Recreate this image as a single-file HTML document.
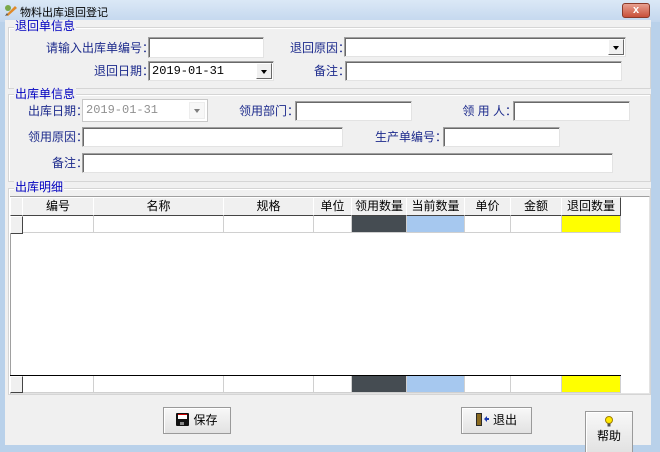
<!DOCTYPE html>
<html><head><meta charset="utf-8"><style>
*{margin:0;padding:0;box-sizing:border-box}
body{width:660px;height:452px;background:#b9d1ea;position:relative;overflow:hidden;font-family:"Liberation Sans","Noto Sans CJK SC",sans-serif;font-size:12px}
.a{position:absolute}
.title{left:0;top:0;width:660px;height:22px;background:linear-gradient(#dbe8f6,#c3d7ee)}
.client{left:5px;top:20px;width:646px;height:425px;background:#f0f0f0}
.grp{position:absolute;border:1px solid #d5d5d5;box-shadow:inset 1px 1px 0 #fff}
.gt{position:absolute;background:#f0f0f0;color:#0000c0;font-size:12px;line-height:13px;padding:0 1px}
.lb{position:absolute;color:#1c2a8c;font-size:12px;line-height:14px;white-space:nowrap;text-align:right;width:150px}
.in{position:absolute;background:#fff;border:1px solid #a0a0a0;border-right-color:#e3e3e3;border-bottom-color:#e3e3e3;box-shadow:inset 1px 1px 0 #696969}
.dd{position:absolute;width:16px;background:#f0f0f0;border:1px solid;border-color:#fff #696969 #696969 #fff}
.dd:after{content:"";position:absolute;left:4px;top:6px;border:3px solid transparent;border-top:4px solid #000;border-bottom:0}
.txt{position:absolute;left:3px;top:2px;font-family:"Liberation Mono","DejaVu Sans Mono",monospace;font-size:12px}
.hd{position:absolute;top:197px;height:19px;background:#f0f0f0;border:1px solid;border-color:#fff #444 #444 #fff;text-align:center;line-height:17px;font-size:12px}
.cl{position:absolute;height:17px;border-right:1px solid #d0d0d0;border-bottom:1px solid #d0d0d0}
.btn{position:absolute;background:linear-gradient(#f8f8f8,#e2e2e2);border:1px solid #9a9a9a;box-shadow:inset 1px 1px 0 #fff;font-size:12px;text-align:center}
</style></head><body>
<div class="a title"></div>
<div class="a" style="left:4px;top:3px;width:14px;height:14px;"><svg width="14" height="14"><path d="M2 12 L11 3 L13 5 L4 13Z" fill="#e08a2a"/><path d="M1 13 L3 10 L4 12Z" fill="#555"/><circle cx="4" cy="5" r="3" fill="#7aa84a"/></svg></div>
<div class="a" style="left:20px;top:4px;font-size:11px;color:#000">物料出库退回登记</div>
<div class="a" style="left:622px;top:3px;width:28px;height:15px;background:linear-gradient(#e8a090,#c8503a);border:1px solid #8a3a2a;border-radius:3px;color:#fff;font-size:11px;text-align:center;line-height:13px;font-weight:bold">x</div>
<div class="a client"></div>

<div class="grp" style="left:8px;top:27px;width:643px;height:62px"></div>
<div class="gt" style="left:14px;top:20px;">退回单信息</div>
<div class="lb" style="left:4px;top:41px">请输入出库单编号：</div>
<div class="in" style="left:148px;top:37px;width:116px;height:21px"></div>
<div class="lb" style="left:200px;top:41px">退回原因：</div>
<div class="in" style="left:344px;top:37px;width:282px;height:20px"><div class="dd" style="right:1px;top:1px;height:16px"></div></div>
<div class="lb" style="left:4px;top:64px">退回日期：</div>
<div class="in" style="left:148px;top:61px;width:126px;height:20px"><span class="txt">2019-01-31</span><div class="dd" style="right:1px;top:1px;height:16px"></div></div>
<div class="lb" style="left:200px;top:64px">备注：</div>
<div class="in" style="left:345px;top:61px;width:277px;height:20px"></div>

<div class="grp" style="left:8px;top:94px;width:643px;height:88px"></div>
<div class="gt" style="left:14px;top:88px;">出库单信息</div>
<div class="lb" style="left:-62px;top:104px">出库日期：</div>
<div class="in" style="left:82px;top:99px;width:126px;height:23px;border-color:#c8c8c8;box-shadow:none"><span class="txt" style="color:#909090;top:3px">2019-01-31</span><div class="dd" style="right:2px;top:2px;height:17px;border-color:#ddd;opacity:.5"></div></div>
<div class="lb" style="left:149px;top:104px">领用部门：</div>
<div class="in" style="left:295px;top:101px;width:117px;height:20px"></div>
<div class="lb" style="left:367px;top:104px">领 用 人：</div>
<div class="in" style="left:513px;top:101px;width:117px;height:20px"></div>
<div class="lb" style="left:-62px;top:130px">领用原因：</div>
<div class="in" style="left:82px;top:127px;width:261px;height:20px"></div>
<div class="lb" style="left:297px;top:130px">生产单编号：</div>
<div class="in" style="left:443px;top:127px;width:117px;height:20px"></div>
<div class="lb" style="left:-62px;top:156px">备注：</div>
<div class="in" style="left:82px;top:153px;width:531px;height:20px"></div>

<div class="grp" style="left:8px;top:188px;width:643px;height:207px"></div>
<div class="gt" style="left:14px;top:181px;">出库明细</div>
<div class="a" style="left:10px;top:196px;width:640px;height:198px;background:#fff;border:1px solid #a0a0a0;border-right-color:#e3e3e3;border-bottom-color:#e3e3e3"></div>
<div class="hd" style="left:10px;width:13px"></div>
<div class="hd" style="left:22px;width:72px">编号</div>
<div class="hd" style="left:93px;width:131px">名称</div>
<div class="hd" style="left:223px;width:91px">规格</div>
<div class="hd" style="left:313px;width:39px">单位</div>
<div class="hd" style="left:351px;width:56px">领用数量</div>
<div class="hd" style="left:406px;width:59px">当前数量</div>
<div class="hd" style="left:464px;width:47px">单价</div>
<div class="hd" style="left:510px;width:52px">金额</div>
<div class="hd" style="left:561px;width:60px">退回数量</div>
<div class="hd" style="left:10px;top:216px;width:13px;height:18px"></div>
<div class="cl" style="left:23px;top:216px;width:71px"></div>
<div class="cl" style="left:94px;top:216px;width:130px"></div>
<div class="cl" style="left:224px;top:216px;width:90px"></div>
<div class="cl" style="left:314px;top:216px;width:38px"></div>
<div class="cl" style="left:352px;top:216px;width:55px;background:#454c52"></div>
<div class="cl" style="left:407px;top:216px;width:58px;background:#a6c8ef"></div>
<div class="cl" style="left:465px;top:216px;width:46px"></div>
<div class="cl" style="left:511px;top:216px;width:51px"></div>
<div class="cl" style="left:562px;top:216px;width:59px;background:#ffff00"></div>
<div class="a" style="left:10px;top:375px;width:611px;height:1px;background:#000"></div>
<div class="hd" style="left:10px;top:376px;width:13px;height:17px"></div>
<div class="cl" style="left:23px;top:376px;width:71px"></div>
<div class="cl" style="left:94px;top:376px;width:130px"></div>
<div class="cl" style="left:224px;top:376px;width:90px"></div>
<div class="cl" style="left:314px;top:376px;width:38px"></div>
<div class="cl" style="left:352px;top:376px;width:55px;background:#454c52"></div>
<div class="cl" style="left:407px;top:376px;width:58px;background:#a6c8ef"></div>
<div class="cl" style="left:465px;top:376px;width:46px"></div>
<div class="cl" style="left:511px;top:376px;width:51px"></div>
<div class="cl" style="left:562px;top:376px;width:59px;background:#ffff00"></div>

<div class="btn" style="left:163px;top:407px;width:68px;height:27px;line-height:25px"><svg width="13" height="13" style="vertical-align:-2px;margin-right:4px"><rect x="0" y="0" width="13" height="13" rx="1" fill="#111"/><rect x="2" y="1" width="9" height="5" fill="#fff"/><rect x="2" y="1" width="9" height="1" fill="#c00"/><rect x="4" y="9" width="4" height="3" fill="#888"/></svg>保存</div>
<div class="btn" style="left:461px;top:407px;width:71px;height:27px;line-height:25px"><svg width="14" height="13" style="vertical-align:-2px;margin-right:3px"><rect x="0" y="0" width="6" height="13" fill="#2a2a2a"/><rect x="1" y="1" width="4" height="11" fill="#8a6a20"/><path d="M8 6 L11 3 L11 5 L13 5 L13 7 L11 7 L11 9Z" fill="#1a3ab0"/></svg>退出</div>
<div class="btn" style="left:585px;top:411px;width:48px;height:41px;border-bottom:0"><div style="margin-top:4px;line-height:10px"><svg width="10" height="11"><circle cx="5" cy="4" r="3.5" fill="#ffe800" stroke="#a08000"/><rect x="3.5" y="7.5" width="3" height="3" fill="#555"/></svg></div><div style="line-height:16px">帮助</div></div>
<div class="a" style="left:0;top:445px;width:585px;height:7px;background:#b9d1ea"></div>
<div class="a" style="left:633px;top:445px;width:27px;height:7px;background:#b9d1ea"></div>
</body></html>
